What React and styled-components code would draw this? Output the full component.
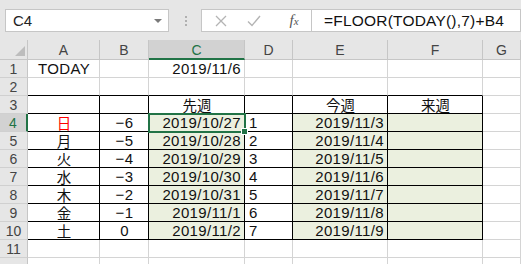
import styled, { createGlobalStyle } from "styled-components";

const GlobalStyle = createGlobalStyle`
  html, body {
    margin: 0;
    padding: 0;
    background: #ffffff;
    overflow: hidden;
  }
  body {
    font-family: "Liberation Sans", "Noto Sans CJK JP", sans-serif;
  }
`;

// toolbar
const Sheet = styled.div`
  width: 521px;
  height: 264px;
  display: flex;
  flex-direction: column;
  overflow: hidden;
`;
const FormulaBar = styled.div`
  height: 40px;
  flex: none;
  box-sizing: border-box;
  background: #e6e6e6;
  display: flex;
  align-items: flex-start;
  padding: 9px 0 0 5px;
`;
const Field = styled.div`
  height: 23px;
  box-sizing: border-box;
  background: #ffffff;
  border: 1px solid #c6c6c6;
  display: flex;
  align-items: center;
  color: #222;
  font-size: 15px;
`;
const NameBox = styled(Field)`
  width: 164px;
  justify-content: space-between;
  padding: 0 6px 0 7px;
`;
const DropArrow = styled.span`
  width: 0;
  height: 0;
  border-left: 4px solid transparent;
  border-right: 4px solid transparent;
  border-top: 4px solid #7a7a7a;
`;
const Dots = styled.div`
  width: 2px;
  margin: 7px 14px 0 16px;
  display: flex;
  flex-direction: column;
  gap: 2px;
  & > i {
    width: 2px;
    height: 2px;
    background: #b0b0b0;
  }
`;
const FuncBox = styled(Field)`
  width: 110px;
  padding-left: 12px;
  border-right: none;
`;
const FuncIcon = styled.span`
  width: ${({ $w }) => $w}px;
  display: flex;
  justify-content: center;
`;
const Fx = styled.span`
  font-family: "Liberation Serif", serif;
  font-style: italic;
  font-size: 15px;
  color: #555;
  & > small {
    font-size: 11px;
  }
`;
const FormulaInput = styled(Field)`
  flex: 1;
  padding-left: 12px;
  font-size: 15.5px;
  letter-spacing: 0.2px;
  color: #111;
`;

// grid
const Grid = styled.div`
  display: grid;
  grid-template-columns: 28px 72px 49px 96px 48px 95px 95px 38px;
  grid-template-rows: 20px repeat(12, 18px);
`;
const Corner = styled.div`
  background: #e6e6e6;
  border-right: 1px solid #c6c6c6;
  border-bottom: 1px solid #c6c6c6;
  box-sizing: border-box;
  display: flex;
  align-items: flex-end;
  justify-content: flex-end;
  padding: 0 2px 3px 0;
`;
const ColHead = styled.div`
  box-sizing: border-box;
  background: ${({ $active }) => ($active ? "#d2d2d2" : "#e6e6e6")};
  border-right: 1px solid #c6c6c6;
  border-bottom: ${({ $active }) => ($active ? "2px solid #217346" : "1px solid #c6c6c6")};
  display: flex;
  align-items: center;
  justify-content: center;
  font-size: 14px;
  color: ${({ $active }) => ($active ? "#217346" : "#444")};
  padding-top: 1px;
`;
const RowHead = styled.div`
  box-sizing: border-box;
  background: ${({ $active }) => ($active ? "#d2d2d2" : "#e6e6e6")};
  border-right: ${({ $active }) => ($active ? "2px solid #217346" : "1px solid #c6c6c6")};
  border-bottom: 1px solid #d0d0d0;
  display: flex;
  align-items: center;
  justify-content: center;
  font-size: 14px;
  line-height: 16px;
  color: ${({ $active }) => ($active ? "#217346" : "#444")};
`;
const Cell = styled.div`
  position: relative;
  box-sizing: border-box;
  background: ${({ $fill }) => ($fill ? "#ebf0df" : "#ffffff")};
  border-right: 1px solid ${({ $r }) => ($r ? "#000" : "#d4d4d4")};
  border-bottom: 1px solid ${({ $b }) => ($b ? "#000" : "#d4d4d4")};
  display: flex;
  align-items: flex-end;
  justify-content: ${({ $align }) =>
    $align === "right" ? "flex-end" : $align === "left" ? "flex-start" : "center"};
  padding: 0 3px 0 4px;
  font-size: 15px;
  line-height: 17px;
  letter-spacing: 0.35px;
  white-space: nowrap;
  color: ${({ $red }) => ($red ? "#ff0000" : "#111")};
  ${({ $selected }) =>
    $selected &&
    `
    outline: 2px solid #217346;
    outline-offset: -1px;
    z-index: 1;
    &::after {
      content: "";
      position: absolute;
      right: -4px;
      bottom: -4px;
      width: 5px;
      height: 5px;
      background: #217346;
      border: 1px solid #fff;
    }
  `}
`;
const Kanji = styled.span`
  display: inline-block;
  height: 17px;
  font-family: "Noto Sans CJK JP", sans-serif;
  font-size: 14.5px;
  line-height: 17px;
  letter-spacing: 0;
`;

const columns = ["A", "B", "C", "D", "E", "F", "G"];
const days = ["日", "月", "火", "水", "木", "金", "土"];
const prev = ["2019/10/27", "2019/10/28", "2019/10/29", "2019/10/30", "2019/10/31", "2019/11/1", "2019/11/2"];
const cur = ["2019/11/3", "2019/11/4", "2019/11/5", "2019/11/6", "2019/11/7", "2019/11/8", "2019/11/9"];
const offsets = ["−6", "−5", "−4", "−3", "−2", "−1", "0"];

// one row -> array of cell props for A..G
const buildRow = (r) => {
  const inTable = r >= 3 && r <= 10;
  const cells = columns.map((_, c) => ({
    $r: inTable && c < 6,
    $b: (inTable || r === 2) && c < 6,
    text: "",
  }));
  if (r === 1) {
    cells[0].text = "TODAY";
    cells[2].text = "2019/11/6";
    cells[2].$align = "right";
  }
  if (r === 3) {
    cells[2].text = <Kanji>先週</Kanji>;
    cells[4].text = <Kanji>今週</Kanji>;
    cells[5].text = <Kanji>来週</Kanji>;
  }
  if (r >= 4 && r <= 10) {
    const i = r - 4;
    cells[0].text = <Kanji>{days[i]}</Kanji>;
    cells[0].$red = i === 0;
    cells[1].text = offsets[i];
    cells[2].text = prev[i];
    cells[2].$align = "right";
    cells[2].$fill = true;
    cells[2].$selected = r === 4;
    cells[3].text = String(i + 1);
    cells[3].$align = "left";
    cells[4].text = cur[i];
    cells[4].$align = "right";
    cells[4].$fill = true;
    cells[5].$fill = true;
  }
  return cells;
};

const rows = Array.from({ length: 12 }, (_, i) => i + 1);

const App = () => {
  return (
    <Sheet>
      <GlobalStyle />
      <FormulaBar>
        <NameBox>
          <span>C4</span>
          <DropArrow />
        </NameBox>
        <Dots>
          <i />
          <i />
          <i />
        </Dots>
        <FuncBox>
          <FuncIcon $w={14}>
            <svg width="12" height="12" viewBox="0 0 12 12">
              <path d="M1 1 L11 11 M11 1 L1 11" stroke="#b4b4b4" strokeWidth="1.3" fill="none" />
            </svg>
          </FuncIcon>
          <FuncIcon $w={52}>
            <svg width="14" height="12" viewBox="0 0 14 12">
              <path d="M1 6.5 L5 10.5 L13 1" stroke="#b4b4b4" strokeWidth="1.4" fill="none" />
            </svg>
          </FuncIcon>
          <FuncIcon $w={28}>
            <Fx>
              f<small>x</small>
            </Fx>
          </FuncIcon>
        </FuncBox>
        <FormulaInput>=FLOOR(TODAY(),7)+B4</FormulaInput>
      </FormulaBar>
      <Grid>
        <Corner>
          <svg width="10" height="10" viewBox="0 0 10 10">
            <polygon points="10,0 10,10 0,10" fill="#bdbdbd" />
          </svg>
        </Corner>
        {columns.map((c) => (
          <ColHead key={c} $active={c === "C"}>
            {c}
          </ColHead>
        ))}
        {rows.map((r) => [
          <RowHead key={`h${r}`} $active={r === 4}>
            {r < 12 ? r : ""}
          </RowHead>,
          ...buildRow(r).map(({ text, ...p }, c) => (
            <Cell key={`${r}-${c}`} {...p}>
              {text}
            </Cell>
          )),
        ])}
      </Grid>
    </Sheet>
  );
};

export default App;
